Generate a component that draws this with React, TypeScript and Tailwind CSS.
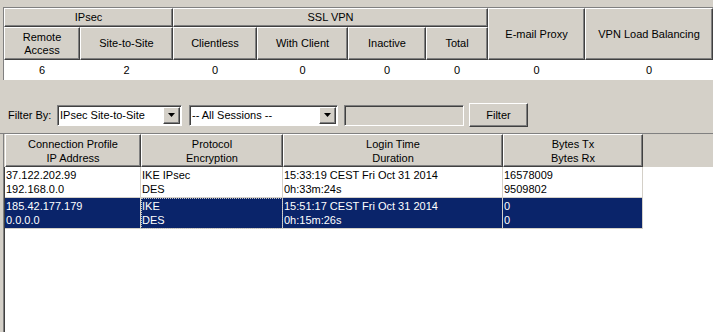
import React from "react";

const raised =
  "bg-[#d4d0c8] border-t border-l border-t-white border-l-white border-r border-b border-r-[#404040] border-b-[#404040] shadow-[inset_-1px_-1px_0_#808080]";
const sunken =
  "border-t border-l border-t-[#808080] border-l-[#808080] border-r border-b border-r-white border-b-white shadow-[inset_1px_1px_0_#404040]";

function Arrow() {
  return (
    <svg width="7" height="4" viewBox="0 0 7 4">
      <path d="M0 0H7L3.5 4Z" fill="#000" />
    </svg>
  );
}

function Combo({ text, width }: { text: string; width: string }) {
  return (
    <div className={`${sunken} ${width} h-[21px] bg-white flex items-stretch`}>
      <div className="flex-1 pl-[2px] flex items-center whitespace-nowrap overflow-hidden">{text}</div>
      <div className={`${raised} w-[17px] flex items-center justify-center m-[1px]`}>
        <Arrow />
      </div>
    </div>
  );
}

export default function App() {
  const topHead = "flex items-center justify-center text-center leading-[13px]";
  const rows = [
    {
      sel: false,
      cells: [
        ["37.122.202.99", "192.168.0.0"],
        ["IKE IPsec", "DES"],
        ["15:33:19 CEST Fri Oct 31 2014", "0h:33m:24s"],
        ["16578009", "9509802"],
      ],
    },
    {
      sel: true,
      cells: [
        ["185.42.177.179", "0.0.0.0"],
        ["IKE", "DES"],
        ["15:51:17 CEST Fri Oct 31 2014", "0h:15m:26s"],
        ["0", "0"],
      ],
    },
  ];
  const widths = ["w-[136px]", "w-[142px]", "w-[220px]", "w-[140px]"];
  return (
    <div className="w-[713px] h-[332px] bg-[#d4d0c8] overflow-hidden flex flex-col text-[11px] text-black font-['Tahoma','Liberation_Sans',sans-serif]">
      {/* Top summary table */}
      <div className="pt-[7px] pl-[3px]">
        <div className="border-l border-t border-[#808080] w-[711px]">
          <div className="grid grid-cols-[76px_93px_84px_91px_78px_62px_97px_128px] grid-rows-[19px_33px_20px]">
            <div className={`${raised} ${topHead} col-span-2`}>IPsec</div>
            <div className={`${raised} ${topHead} col-span-4`}>SSL VPN</div>
            <div className={`${raised} ${topHead} row-span-2`}>E-mail Proxy</div>
            <div className={`${raised} ${topHead} row-span-2`}>VPN Load Balancing</div>
            <div className={`${raised} ${topHead}`}>
              Remote
              <br />
              Access
            </div>
            <div className={`${raised} ${topHead}`}>Site-to-Site</div>
            <div className={`${raised} ${topHead}`}>Clientless</div>
            <div className={`${raised} ${topHead}`}>With Client</div>
            <div className={`${raised} ${topHead}`}>Inactive</div>
            <div className={`${raised} ${topHead}`}>Total</div>
            {["6", "2", "0", "0", "0", "0", "0", "0"].map((v, i) => (
              <div key={i} className="bg-white flex items-center justify-center">
                {v}
              </div>
            ))}
          </div>
        </div>
      </div>

      {/* Filter row */}
      <div className="mt-[23px] h-[24px] flex items-center pl-[8px]">
        <span className="w-[49px] whitespace-nowrap">Filter By:</span>
        <Combo text="IPsec Site-to-Site" width="w-[125px]" />
        <div className="w-[7px]" />
        <Combo text="-- All Sessions --" width="w-[149px]" />
        <div className="w-[6px]" />
        <div className={`${sunken} w-[120px] h-[21px] bg-[#d4d0c8]`} />
        <div className="w-[5px]" />
        <div className={`${raised} w-[59px] h-[24px] flex items-center justify-center`}>Filter</div>
      </div>

      {/* Separator */}
      <div className="mt-[6px] h-px bg-[#808080]" />

      {/* Sessions list */}
      <div className="ml-[3px] flex-1 bg-white border-l border-[#808080] shadow-[inset_1px_0_0_#404040] flex flex-col">
        <div className="flex h-[33px] bg-[#d4d0c8]">
          {[
            ["Connection Profile", "IP Address"],
            ["Protocol", "Encryption"],
            ["Login Time", "Duration"],
            ["Bytes Tx", "Bytes Rx"],
          ].map((h, i) => (
            <div key={i} className={`${raised} ${widths[i]} flex flex-col items-center justify-center leading-[14px] ${i === 0 ? "ml-px" : ""}`}>
              <span>{h[0]}</span>
              <span>{h[1]}</span>
            </div>
          ))}
          <div className="flex-1" />
        </div>
        {rows.map((r, ri) => (
          <div key={ri} className={`flex h-[31px] ${ri === 0 ? "pl-px" : "pl-px"}`}>
            {r.cells.map((c, ci) => (
              <div
                key={ci}
                className={`${widths[ci]} flex flex-col justify-center leading-[14px] pl-px border-r border-b border-[#d4d0c8] whitespace-nowrap ${
                  r.sel ? "bg-[#0a246a] text-white" : "bg-white"
                } ${r.sel && ci === 1 ? "outline-1 outline-dotted outline-[#c0c0c0] -outline-offset-1" : ""}`}
              >
                <span>{c[0]}</span>
                <span>{c[1]}</span>
              </div>
            ))}
          </div>
        ))}
      </div>
    </div>
  );
}
